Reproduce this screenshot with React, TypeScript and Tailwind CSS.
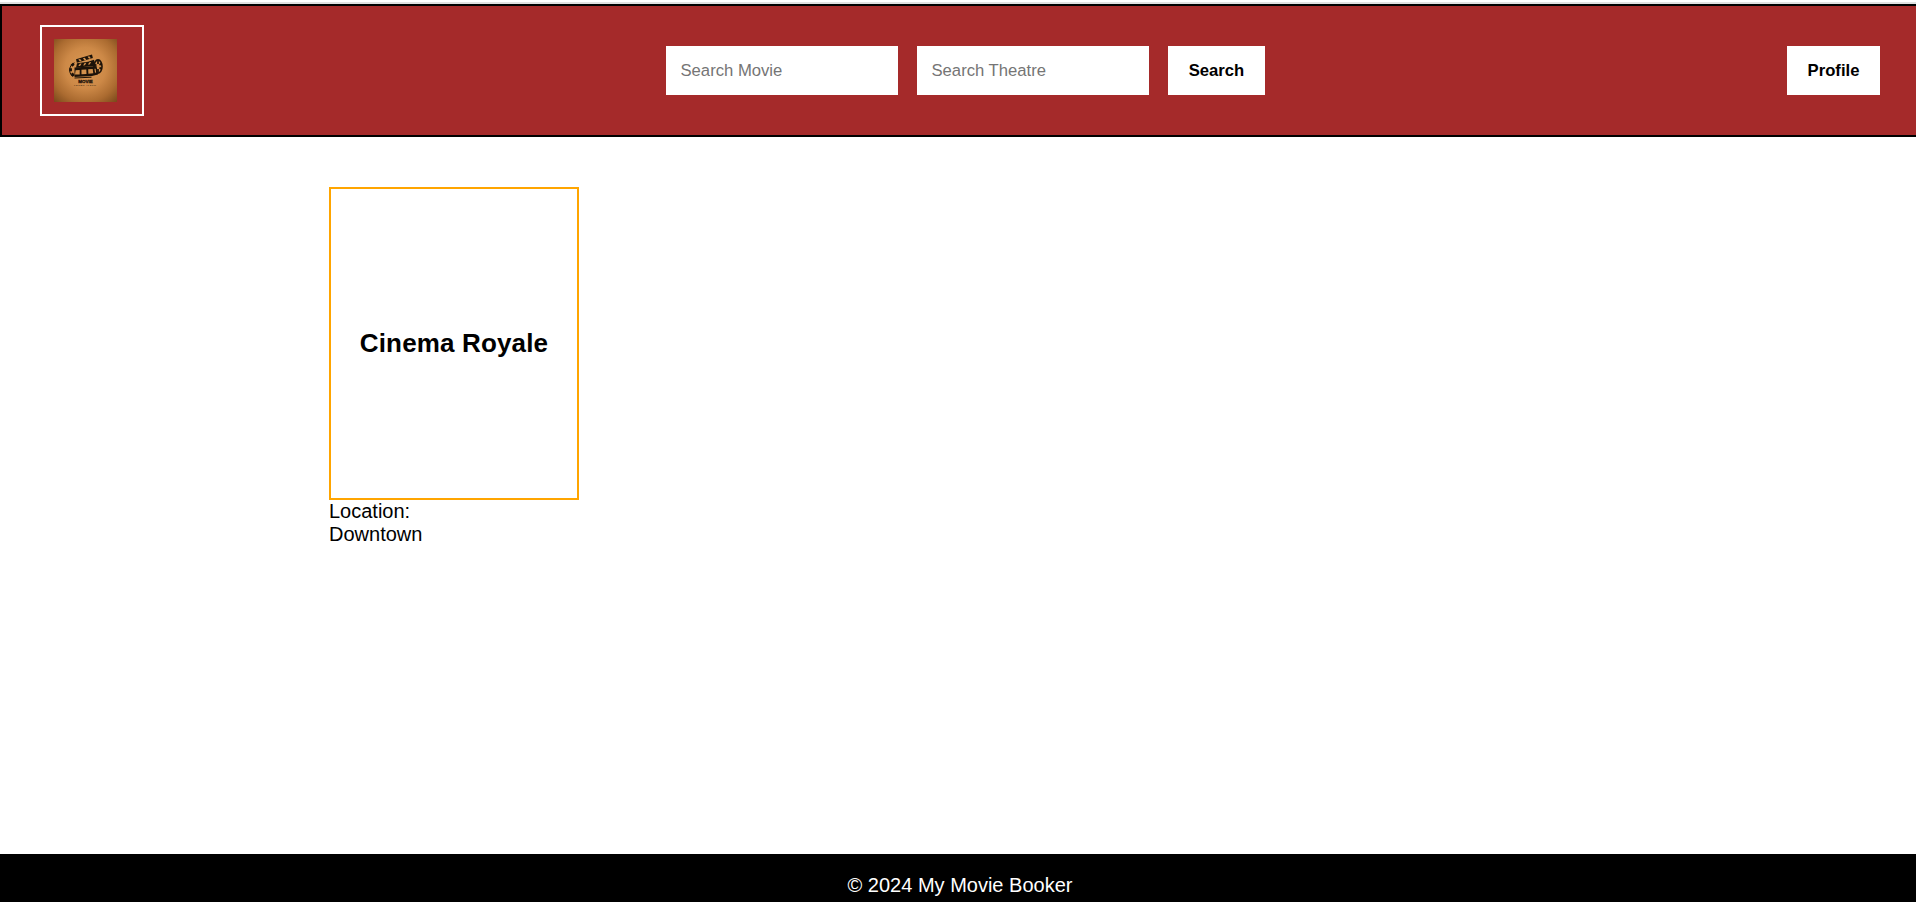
import React from "react";

function Logo() {
  return (
    <svg width="63" height="63" viewBox="0 0 63 63" role="img" aria-label="Movie logo">
      <defs>
        <radialGradient id="glow" cx="50%" cy="46%" r="72%">
          <stop offset="0" stopColor="#dc9a54" />
          <stop offset="0.45" stopColor="#cd8947" />
          <stop offset="0.75" stopColor="#ab6b30" />
          <stop offset="1" stopColor="#7d4a1c" />
        </radialGradient>
      </defs>
      <rect width="63" height="63" fill="url(#glow)" />
      <g fill="none" stroke="#1c1209">
        <ellipse cx="44" cy="27.500" rx="4" ry="6.600" strokeWidth="1.600" />
        <path d="M44 21.500v3.500M44 30v3.500M40.500 25.500l2 1M45.500 28.500l2 1.500M47.500 24.500l-2 1.500M42.500 29l-1.500 1.500" strokeWidth="1.700" />
        <path d="M20.500 23.800c-5.500 2.200-6.500 9.500-2 13.700" strokeWidth="1" />
        <path d="M19.800 24.800l-2.300 1.900M16.600 29.300v3M17.800 34.300l2 2.700" strokeWidth="2.700" />
      </g>
      <g fill="#1c1209">
        <path d="M22 20.300l16-4.800.9 3.400-16 4.800z" />
        <path d="M23 24.300l11-1.600 6-2 1.500 6-19.500 2z" />
        <path d="M20.500 28.500l22-1.500 1.500 8.500-6 1.500-17.500 1z" />
      </g>
      <g fill="#d3914c">
        <path d="M24.300 20.600l1.800-.5 1.600 2-1.800.5zM28.900 19.200l1.800-.5 1.600 2-1.800.5zM33.500 17.800l1.800-.5 1.600 2-1.800.5z" />
        <path d="M25.800 24.700l1.800-.3-1.500 2.500-1.800.2zM30.600 24l1.800-.3-1.500 2.500-1.800.2zM35.400 23.200l1.800-.3-1.500 2.500-1.800.2z" />
        <path d="M21.600 31.200l4.100-.3v4.500l-4.700.2zM27.500 30.800l4.800-.3.200 4.500-5 .2zM34.200 30.300l4.500-.3.600 4.300-4.900.4zM40.400 29.800l1.200-.1.600 3.900-1.200.2z" />
      </g>
      <path d="M20.500 39l17-.8" stroke="#1c1209" strokeWidth="1" />
      <text x="31.500" y="44" textAnchor="middle" textLength="14.500" lengthAdjust="spacingAndGlyphs" fontSize="4.200" fontWeight="900" fill="#1c1209" stroke="#1c1209" strokeWidth=".3">MOVIE</text>
      <text x="31" y="47" textAnchor="middle" textLength="22" fontSize="2.300" fill="#1c1209">LOREM IPSUM</text>
    </svg>
  );
}

const inputClass =
  "h-[49px] w-[232px] bg-white px-[15px] text-[16.667px] text-black outline-none placeholder:text-[#757575]";
const buttonClass = "h-[49px] bg-white text-[16.667px] font-bold text-black";

export default function App() {
  return (
    <div className="flex h-[902px] flex-col overflow-hidden bg-white font-['Liberation_Sans',Arial,sans-serif] text-[20px] leading-[23px] text-black">
      <div className="mt-[2px] h-[2px] shrink-0 bg-[#e0e0e0]" />
      <header className="flex h-[133px] shrink-0 items-center justify-between border-2 border-r-0 border-black bg-[#a52a2a] pr-[36px] pl-[38px]">
        <div className="flex h-[91px] w-[104px] items-center border-2 border-white pl-[12px]">
          <Logo />
        </div>
        <form className="mr-[1px] flex gap-[19px]" onSubmit={(e) => e.preventDefault()}>
          <input className={inputClass} type="text" placeholder="Search Movie" />
          <input className={inputClass} type="text" placeholder="Search Theatre" />
          <button className={`${buttonClass} w-[97px] pl-[1px]`}>Search</button>
        </form>
        <button className={`${buttonClass} w-[93px]`}>Profile</button>
      </header>
      <main className="flex-1 pt-[50px] pl-[329px]">
        <section className="w-[250px]">
          <div className="flex h-[313px] items-center justify-center border-2 border-[orange] pb-[2px]">
            <h2 className="text-[26px] leading-[30px] font-bold tracking-[0.15px]">Cinema Royale</h2>
          </div>
          <p>
            Location:
            <br />
            Downtown
          </p>
        </section>
      </main>
      <footer className="h-[48px] shrink-0 bg-black pt-[20px] pl-[4px] text-center text-white">
        © 2024 My Movie Booker
      </footer>
    </div>
  );
}
